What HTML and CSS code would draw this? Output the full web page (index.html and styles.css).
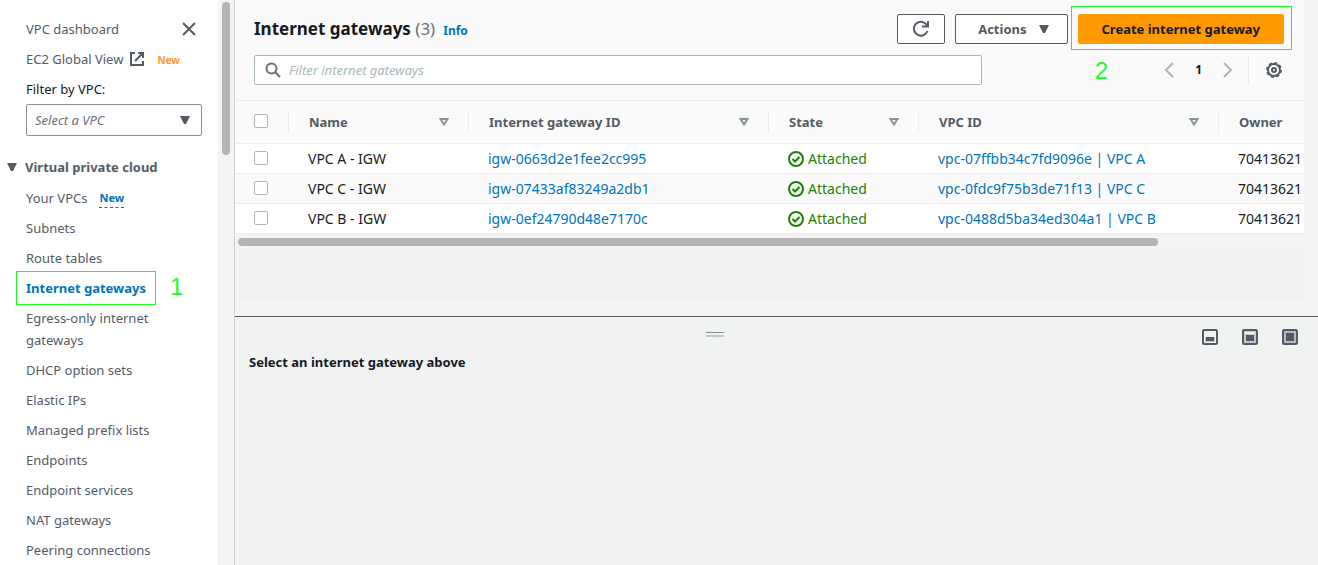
FILE: index.html
```html
<!DOCTYPE html>
<html lang="en">
<head>
<meta charset="utf-8">
<meta name="viewport" content="width=device-width, initial-scale=1">
<title>Internet gateways | VPC</title>
<link rel="stylesheet" href="styles.css">
</head>
<body>
<div class="app">
  <nav class="sidebar" aria-label="VPC">
    <div class="sidebar-content">
      <div class="nav-top">
        <a class="nav-link" href="#">VPC dashboard</a>
        <button class="icon-button" type="button" aria-label="Close navigation">
          <svg width="16" height="16" viewBox="0 0 16 16" fill="none" stroke="#545b64" stroke-width="2"><path d="M2 2l12 12M14 2L2 14"/></svg>
        </button>
      </div>
      <div class="nav-row">
        <a class="nav-link nav-external" href="#">EC2 Global View
          <svg width="16" height="16" viewBox="0 0 16 16" fill="none" stroke="#545b64" stroke-width="2"><path d="M6 2H2v12h12v-4M9 2h5v5M14 2L6 10"/></svg>
        </a>
        <span class="tag-new">New</span>
      </div>
      <label class="filter-label" for="vpc-filter">Filter by VPC:</label>
      <div class="select-wrap">
        <select id="vpc-filter" class="vpc-select"><option>Select a VPC</option></select>
        <svg class="select-arrow" width="10" height="8" viewBox="0 0 10 8" fill="#545b64"><path d="M0 0h10L6 8H4z"/></svg>
      </div>
      <button class="section-toggle" type="button" aria-expanded="true">
        <svg width="10" height="8" viewBox="0 0 10 8" fill="#545b64"><path d="M0 0h10L6 8H4z"/></svg>
        Virtual private cloud
      </button>
      <ul class="nav-list">
        <li class="nav-row"><a class="nav-link" href="#">Your VPCs</a><a class="badge-new" href="#">New</a></li>
        <li><a class="nav-link" href="#">Subnets</a></li>
        <li><a class="nav-link" href="#">Route tables</a></li>
        <li><a class="nav-link active" href="#" aria-current="page">Internet gateways</a><span class="callout-one">1</span></li>
        <li><a class="nav-link" href="#">Egress-only internet gateways</a></li>
        <li><a class="nav-link" href="#">DHCP option sets</a></li>
        <li><a class="nav-link" href="#">Elastic IPs</a></li>
        <li><a class="nav-link" href="#">Managed prefix lists</a></li>
        <li><a class="nav-link" href="#">Endpoints</a></li>
        <li><a class="nav-link" href="#">Endpoint services</a></li>
        <li><a class="nav-link" href="#">NAT gateways</a></li>
        <li><a class="nav-link" href="#">Peering connections</a></li>
      </ul>
    </div>
    <div class="scroll-track"><div class="scroll-thumb"></div></div>
  </nav>

  <main class="main">
    <div class="upper">
      <section class="table-card">
        <header class="card-header">
          <div class="title-row">
            <h1 class="title">Internet gateways <span class="count">(3)</span></h1>
            <a class="info" href="#">Info</a>
            <div class="actions">
              <button class="btn btn-refresh" type="button" aria-label="Refresh">
                <svg width="18" height="18" viewBox="0 0 18 18" fill="none" stroke="#545b64" stroke-width="2"><path d="M15.500 11A7 7 0 1 1 14.500 4.500L16 6M16 1v5.500h-6"/></svg>
              </button>
              <button class="btn" type="button">Actions
                <svg width="10" height="8" viewBox="0 0 10 8" fill="#545b64"><path d="M0 0h10L6 8H4z"/></svg>
              </button>
              <button class="btn btn-primary" type="button">Create internet gateway</button>
            </div>
          </div>
          <div class="tools-row">
            <div class="search">
              <svg class="search-icon" width="16" height="16" viewBox="0 0 16 16" fill="none" stroke="#687078" stroke-width="2"><circle cx="6.500" cy="6.500" r="5"/><path d="M10 10l5 5"/></svg>
              <input class="search-input" type="text" placeholder="Filter internet gateways" aria-label="Filter internet gateways">
            </div>
            <span class="callout-two">2</span>
            <div class="pager">
              <button class="icon-button" type="button" aria-label="Previous page">
                <svg width="10" height="16" viewBox="0 0 10 16" fill="none" stroke="#aab7b8" stroke-width="2"><path d="M9 1L2 8l7 7"/></svg>
              </button>
              <button class="page" type="button">1</button>
              <button class="icon-button" type="button" aria-label="Next page">
                <svg width="10" height="16" viewBox="0 0 10 16" fill="none" stroke="#aab7b8" stroke-width="2"><path d="M1 1l7 7-7 7"/></svg>
              </button>
            </div>
            <div class="settings">
              <button class="icon-button" type="button" aria-label="Preferences">
                <svg width="16" height="16" viewBox="0 0 16 16" fill="none" stroke="#545b64"><circle cx="8" cy="8" r="6" stroke-width="2"/><circle cx="8" cy="8" r="7.200" stroke-width="1.600" stroke-dasharray="3.200 2.450"/><circle cx="8" cy="8" r="2" stroke-width="2"/></svg>
              </button>
            </div>
          </div>
        </header>
        <div class="table-scroll">
          <table class="grid">
            <colgroup><col class="c-check"><col class="c-name"><col class="c-id"><col class="c-state"><col class="c-vpc"><col class="c-owner"></colgroup>
            <thead>
              <tr>
                <th class="check"><input class="box" type="checkbox" aria-label="Select all"></th>
                <th><span class="head">Name<svg width="10" height="8" viewBox="0 0 10 8" fill="none" stroke="#879596" stroke-width="2"><path d="M1.500 1h7L5 6.500z"/></svg></span></th>
                <th><span class="head">Internet gateway ID<svg width="10" height="8" viewBox="0 0 10 8" fill="none" stroke="#879596" stroke-width="2"><path d="M1.500 1h7L5 6.500z"/></svg></span></th>
                <th><span class="head">State<svg width="10" height="8" viewBox="0 0 10 8" fill="none" stroke="#879596" stroke-width="2"><path d="M1.500 1h7L5 6.500z"/></svg></span></th>
                <th><span class="head">VPC ID<svg width="10" height="8" viewBox="0 0 10 8" fill="none" stroke="#879596" stroke-width="2"><path d="M1.500 1h7L5 6.500z"/></svg></span></th>
                <th><span class="head">Owner</span></th>
              </tr>
            </thead>
            <tbody>
              <tr>
                <td class="check"><input class="box" type="checkbox" aria-label="Select VPC A - IGW"></td>
                <td>VPC A - IGW</td>
                <td><a class="link" href="#">igw-0663d2e1fee2cc995</a></td>
                <td><span class="status"><svg width="16" height="16" viewBox="0 0 16 16" fill="none" stroke="#1d8102" stroke-width="2"><circle cx="8" cy="8" r="7"/><path d="M4.500 8l2.500 2.500 4.500-4.500"/></svg>Attached</span></td>
                <td><a class="link" href="#">vpc-07ffbb34c7fd9096e | VPC A</a></td>
                <td>70413621</td>
              </tr>
              <tr>
                <td class="check"><input class="box" type="checkbox" aria-label="Select VPC C - IGW"></td>
                <td>VPC C - IGW</td>
                <td><a class="link" href="#">igw-07433af83249a2db1</a></td>
                <td><span class="status"><svg width="16" height="16" viewBox="0 0 16 16" fill="none" stroke="#1d8102" stroke-width="2"><circle cx="8" cy="8" r="7"/><path d="M4.500 8l2.500 2.500 4.500-4.500"/></svg>Attached</span></td>
                <td><a class="link" href="#">vpc-0fdc9f75b3de71f13 | VPC C</a></td>
                <td>70413621</td>
              </tr>
              <tr>
                <td class="check"><input class="box" type="checkbox" aria-label="Select VPC B - IGW"></td>
                <td>VPC B - IGW</td>
                <td><a class="link" href="#">igw-0ef24790d48e7170c</a></td>
                <td><span class="status"><svg width="16" height="16" viewBox="0 0 16 16" fill="none" stroke="#1d8102" stroke-width="2"><circle cx="8" cy="8" r="7"/><path d="M4.500 8l2.500 2.500 4.500-4.500"/></svg>Attached</span></td>
                <td><a class="link" href="#">vpc-0488d5ba34ed304a1 | VPC B</a></td>
                <td>70413621</td>
              </tr>
            </tbody>
          </table>
        </div>
        <div class="h-track"><div class="h-thumb"></div></div>
        <div class="card-space"></div>
      </section>
    </div>
    <section class="details">
      <div class="details-bar">
        <svg class="grip" width="18" height="6" viewBox="0 0 18 6"><path d="M0 0h18v1H0z" fill="#879596"/><path d="M0 3h18v2H0z" fill="#c3c8c8"/></svg>
        <div class="panel-sizes">
          <button class="icon-button" type="button" aria-label="Small panel"><svg width="16" height="16" viewBox="0 0 16 16"><rect x="1" y="1" width="14" height="14" rx="1" fill="#f1f3f3" stroke="#545b64" stroke-width="2"/><path d="M3 8h10v5H3z" fill="#c3c8cb"/><path d="M4 8h8v4H4z" fill="#545b64"/></svg></button>
          <button class="icon-button" type="button" aria-label="Medium panel"><svg width="16" height="16" viewBox="0 0 16 16"><rect x="1" y="1" width="14" height="14" rx="1" fill="#c3c8cb" stroke="#545b64" stroke-width="2"/><path d="M3 3h10v2H3z" fill="#f1f3f3"/><path d="M4 6h8v6H4z" fill="#545b64"/></svg></button>
          <button class="icon-button" type="button" aria-label="Full panel"><svg width="16" height="16" viewBox="0 0 16 16"><rect x="1" y="1" width="14" height="14" rx="1" fill="#b4b9bd" stroke="#545b64" stroke-width="2"/><path d="M4 4h8v8H4z" fill="#545b64"/></svg></button>
        </div>
      </div>
      <h2 class="details-title">Select an internet gateway above</h2>
    </section>
  </main>
</div>
</body>
</html>
```
FILE: styles.css
```css
* { box-sizing: border-box; }
body {
  margin: 0;
  background: #fff;
  color: #16191f;
  font: 13px/22px "Noto Sans", "Open Sans", sans-serif;
  overflow: hidden;
}
button, input, select { font: inherit; color: inherit; }
button { padding: 0; border: 0; background: none; }
a { text-decoration: none; }
svg { display: block; flex: none; }
.app { display: flex; height: 100vh; }

/* Side navigation */
.sidebar { display: flex; flex: none; width: 235px; border-right: 1px solid #ccd1d1; overflow: hidden; }
.sidebar-content { flex: 1; padding: 18px 16px 0 26px; }
.scroll-track { width: 16px; padding: 2px 4px; background: #f4f4f4; }
.scroll-thumb { height: 153px; border-radius: 4px; background: #b5b5b5; }
.nav-top { display: flex; justify-content: space-between; align-items: center; padding-right: 5px; }
.nav-link { color: #545b64; }
.nav-row { display: flex; align-items: center; gap: 12px; }
.nav-top, .sidebar-content > .nav-row { margin-bottom: 8px; }
.nav-external { display: flex; align-items: center; gap: 6px; }
.tag-new { padding-top: 2px; color: #ff9933; font-size: 10px; line-height: 20px; font-weight: 700; }
.filter-label { display: block; margin-bottom: 4px; }
.select-wrap { display: grid; align-items: center; }
.vpc-select {
  grid-area: 1 / 1;
  width: 100%;
  height: 32px;
  padding: 0 8px;
  border: 1px solid #879596;
  border-radius: 2px;
  background: #fff;
  color: #687078;
  font-style: italic;
  appearance: none;
}
.select-arrow { grid-area: 1 / 1; justify-self: end; margin-right: 12px; pointer-events: none; }
.section-toggle {
  display: flex;
  align-items: center;
  gap: 8px;
  margin: 20px 0 9px -19px;
  color: #545b64;
  font-weight: 700;
  white-space: nowrap;
}
.nav-list { display: grid; gap: 8px; margin: 0; padding: 0; list-style: none; }
.nav-list > li { position: relative; }
.badge-new { color: #0073bb; font-size: 11px; line-height: 18px; font-weight: 700; border-bottom: 1px dashed #0073bb; }
.active { position: relative; color: #0073bb; font-weight: 700; }
.active::after { content: ""; position: absolute; inset: -8px -10px; border: 1px solid #1aff1a; }
.callout-one, .callout-two { color: #1aff1a; font: 24px/28px "Liberation Sans", sans-serif; }
.callout-one { position: absolute; left: 144px; top: -4px; }

/* Main area */
.main { flex: 1; min-width: 0; display: flex; flex-direction: column; }
.upper { padding: 0 14px 16px 0; background: #f4f4f4; border-bottom: 1px solid #545b64; }
.table-card { background: #fafafa; }
.card-header { padding: 14px 20px 15px 19px; border-bottom: 1px solid #eaeded; }
.title-row { display: flex; align-items: center; }
.title { margin: 0; font-size: 17px; line-height: 30px; font-weight: 700; }
.count { color: #687078; font-weight: 400; }
.info { margin-left: 8px; padding-top: 3px; color: #0073bb; font-size: 12px; font-weight: 700; }
.actions { display: flex; gap: 10px; margin-left: auto; }
.btn {
  display: flex;
  align-items: center;
  gap: 12px;
  height: 30px;
  padding: 0 18px 0 22px;
  border: 1px solid #545b64;
  border-radius: 2px;
  background: #fff;
  color: #545b64;
  font-weight: 700;
}
.btn-refresh { padding: 0 14px; }
.btn-primary { position: relative; padding: 0 23px; border-color: #ff9900; background: #ff9900; color: #16191f; }
.btn-primary::after { content: ""; position: absolute; inset: -9px -9px -7px -8px; border: 1px solid #1aff1a; }
.tools-row { display: flex; align-items: center; margin-top: 11px; }
.search { display: grid; flex: 0 1 728px; align-items: center; }
.search-icon { grid-area: 1 / 1; margin-left: 11px; z-index: 1; }
.search-input { grid-area: 1 / 1; width: 100%; height: 30px; padding: 0 12px 0 34px; border: 1px solid #aab7b8; border-radius: 2px; background: #fff; }
.search-input::placeholder { color: #aab7b8; opacity: 1; font-style: italic; }
.callout-two { margin: 2px 56px 0 auto; }
.pager { display: flex; align-items: center; gap: 21px; padding-right: 15px; }
.page { font-size: 12px; font-weight: 700; }
.settings { display: flex; align-items: center; height: 30px; padding: 0 2px 0 17px; border-left: 1px solid #eaeded; }

/* Gateway table */
.table-scroll { overflow: hidden; }
.grid { table-layout: fixed; width: 1164px; border-collapse: separate; border-spacing: 0; background: #fff; }
.c-check { width: 54px; }
.c-name, .c-owner { width: 180px; }
.c-id, .c-vpc { width: 300px; }
.c-state { width: 150px; }
.grid th { height: 43px; padding: 0; border-bottom: 1px solid #eaeded; background: #fafafa; color: #545b64; text-align: left; }
.grid td { height: 30px; padding: 0 0 0 19px; border-bottom: 1px solid #eaeded; font-size: 14px; white-space: nowrap; }
.grid tbody tr:nth-child(even) td { background: #fafafa; }
.head { display: flex; align-items: center; justify-content: space-between; padding: 0 19px 0 20px; border-right: 1px solid #eaeded; }
.grid .check { padding: 0 0 2px 19px; line-height: 0; }
.grid th.check { background: linear-gradient(#eaeded, #eaeded) right center / 1px 21px no-repeat #fafafa; }
.box { width: 14px; height: 14px; margin: 0; border: 1px solid #aab7b8; border-radius: 2px; background: #fff; appearance: none; }
.link { color: #0073bb; }
.status { display: flex; align-items: center; gap: 4px; color: #1d8102; }
.h-track { padding: 4px 146px 4px 3px; background: #f4f4f4; }
.h-thumb { height: 8px; border-radius: 4px; background: #b5b5b5; }
.card-space { height: 50px; background: #f1f3f3; }

/* Details panel */
.details { flex: 1; padding: 12px 20px 0 14px; background: #f1f3f3; }
.details-bar { display: grid; grid-template-columns: 31fr auto 39fr; }
.grip { grid-column: 2; margin-top: 3px; }
.panel-sizes { grid-column: 3; justify-self: end; display: flex; gap: 24px; }
.details-title { margin: 6px 0 0; font-size: 13px; font-weight: 700; }
```
